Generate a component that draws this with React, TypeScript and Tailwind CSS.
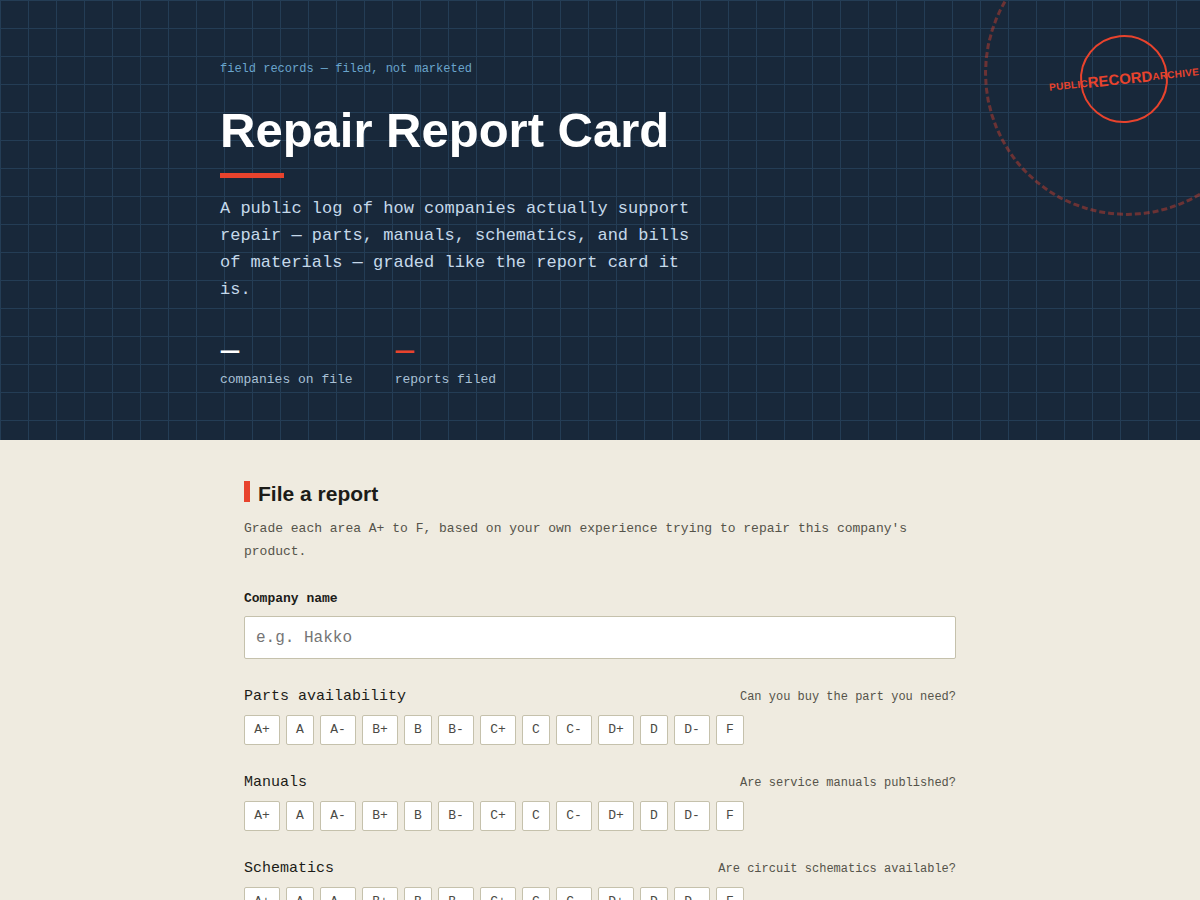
import React, { useState } from 'react';
import clsx from 'clsx';

const GRADES = ['A+', 'A', 'A-', 'B+', 'B', 'B-', 'C+', 'C', 'C-', 'D+', 'D', 'D-', 'F'];

const AREAS = [
  { id: 'parts', label: 'Parts availability', hint: 'Can you buy the part you need?' },
  { id: 'manuals', label: 'Manuals', hint: 'Are service manuals published?' },
  { id: 'schematics', label: 'Schematics', hint: 'Are circuit schematics available?' },
];

function Stamp() {
  return (
    <>
      <div className="absolute -top-[70px] -right-[70px] size-[286px] rounded-full border-3 border-dashed border-[#e8432d] opacity-40" />
      <div className="absolute top-[35px] right-8 flex size-[88px] -rotate-6 items-center justify-center rounded-full border-2 border-[#e8432d] font-['Liberation_Sans',sans-serif] font-bold text-[#e8432d]">
        <span className="text-[10px] tracking-wide">PUBLIC</span>
        <span className="text-[15px]">RECORD</span>
        <span className="text-[10px] tracking-wide">ARCHIVE</span>
      </div>
    </>
  );
}

function Stat({ label, accent }: { label: string; accent?: boolean }) {
  return (
    <div>
      <div
        className={clsx(
          "font-['Open_Sans',sans-serif] text-xl leading-8 font-extrabold",
          accent ? 'text-[#e8432d]' : 'text-white'
        )}
      >
        —
      </div>
      <div className="mt-0.5 text-[13px] leading-6 text-[#a9c1d6]">{label}</div>
    </div>
  );
}

function Header() {
  return (
    <header className="relative overflow-hidden bg-[#18283a] bg-[linear-gradient(#243d55_1px,transparent_1px),linear-gradient(90deg,#243d55_1px,transparent_1px)] bg-[size:28px_28px] px-6 pt-[57px] pb-12">
      <Stamp />
      <div className="relative mx-auto max-w-[760px]">
        <p className="text-xs leading-6 text-[#6aa5cc]">field records — filed, not marketed</p>
        <h1 className="mt-[19px] font-['Liberation_Sans',sans-serif] text-[49px] leading-15 font-bold text-white">
          Repair Report Card
        </h1>
        <div className="mt-[13px] h-[5px] w-16 bg-[#e8432d]" />
        <p className="mt-[17px] max-w-[480px] text-[17px] leading-[27px] text-[#c5d9ea]">
          A public log of how companies actually support repair — parts, manuals, schematics, and bills of
          materials — graded like the report card it is.
        </p>
        <div className="mt-[31px] flex gap-[42px]">
          <Stat label="companies on file" />
          <Stat label="reports filed" accent />
        </div>
      </div>
    </header>
  );
}

interface GradeRowProps {
  id: string;
  label: string;
  hint: string;
  value?: string;
  onChange: (grade: string) => void;
}

function GradeRow({ id, label, hint, value, onChange }: GradeRowProps) {
  return (
    <div role="group" aria-labelledby={id} className="mt-[26px]">
      <div className="flex items-baseline justify-between">
        <span id={id} className="text-[15px] leading-6 font-medium text-[#1c1c18]">
          {label}
        </span>
        <span className="text-xs text-[#55534a]">{hint}</span>
      </div>
      <div className="mt-1.5 flex flex-wrap gap-1.5">
        {GRADES.map((grade) => (
          <button
            key={grade}
            type="button"
            aria-pressed={value === grade}
            onClick={() => onChange(grade)}
            className={clsx(
              'h-[30px] rounded-xs border text-[13px]',
              grade.length > 1 ? 'w-9' : 'w-7',
              value === grade
                ? 'border-[#18283a] bg-[#18283a] text-white'
                : 'border-[#c5c1ac] bg-white text-[#4a4a45]'
            )}
          >
            {grade}
          </button>
        ))}
      </div>
    </div>
  );
}

export default function App() {
  const [company, setCompany] = useState('');
  const [grades, setGrades] = useState<Record<string, string>>({});

  return (
    <div className="min-h-screen bg-[#efebe0] font-['Liberation_Mono',monospace]">
      <Header />
      <main className="mx-auto max-w-[760px] px-6 pt-10 pb-16">
        <h2 className="flex items-start gap-2 font-['Liberation_Sans',sans-serif] text-[21px] leading-7 font-bold text-[#1c1c18]">
          <span className="mt-px h-[21px] w-1.5 bg-[#e8432d]" />
          File a report
        </h2>
        <p className="mt-[9px] text-[13px] leading-[23px] text-[#55534a]">
          Grade each area A+ to F, based on your own experience trying to repair this company's product.
        </p>
        <form className="mt-6" onSubmit={(e) => e.preventDefault()}>
          <label htmlFor="company" className="block text-[13px] leading-6 font-semibold text-[#1c1c18]">
            Company name
          </label>
          <input
            id="company"
            value={company}
            onChange={(e) => setCompany(e.target.value)}
            placeholder="e.g. Hakko"
            className="mt-[5px] block h-[43px] w-full rounded-xs border border-[#c5c1ac] bg-white px-[11px] text-base text-[#1c1c18] placeholder:text-[#757575]"
          />
          {AREAS.map((area) => (
            <GradeRow
              key={area.id}
              {...area}
              value={grades[area.id]}
              onChange={(grade) => setGrades({ ...grades, [area.id]: grade })}
            />
          ))}
        </form>
      </main>
    </div>
  );
}
